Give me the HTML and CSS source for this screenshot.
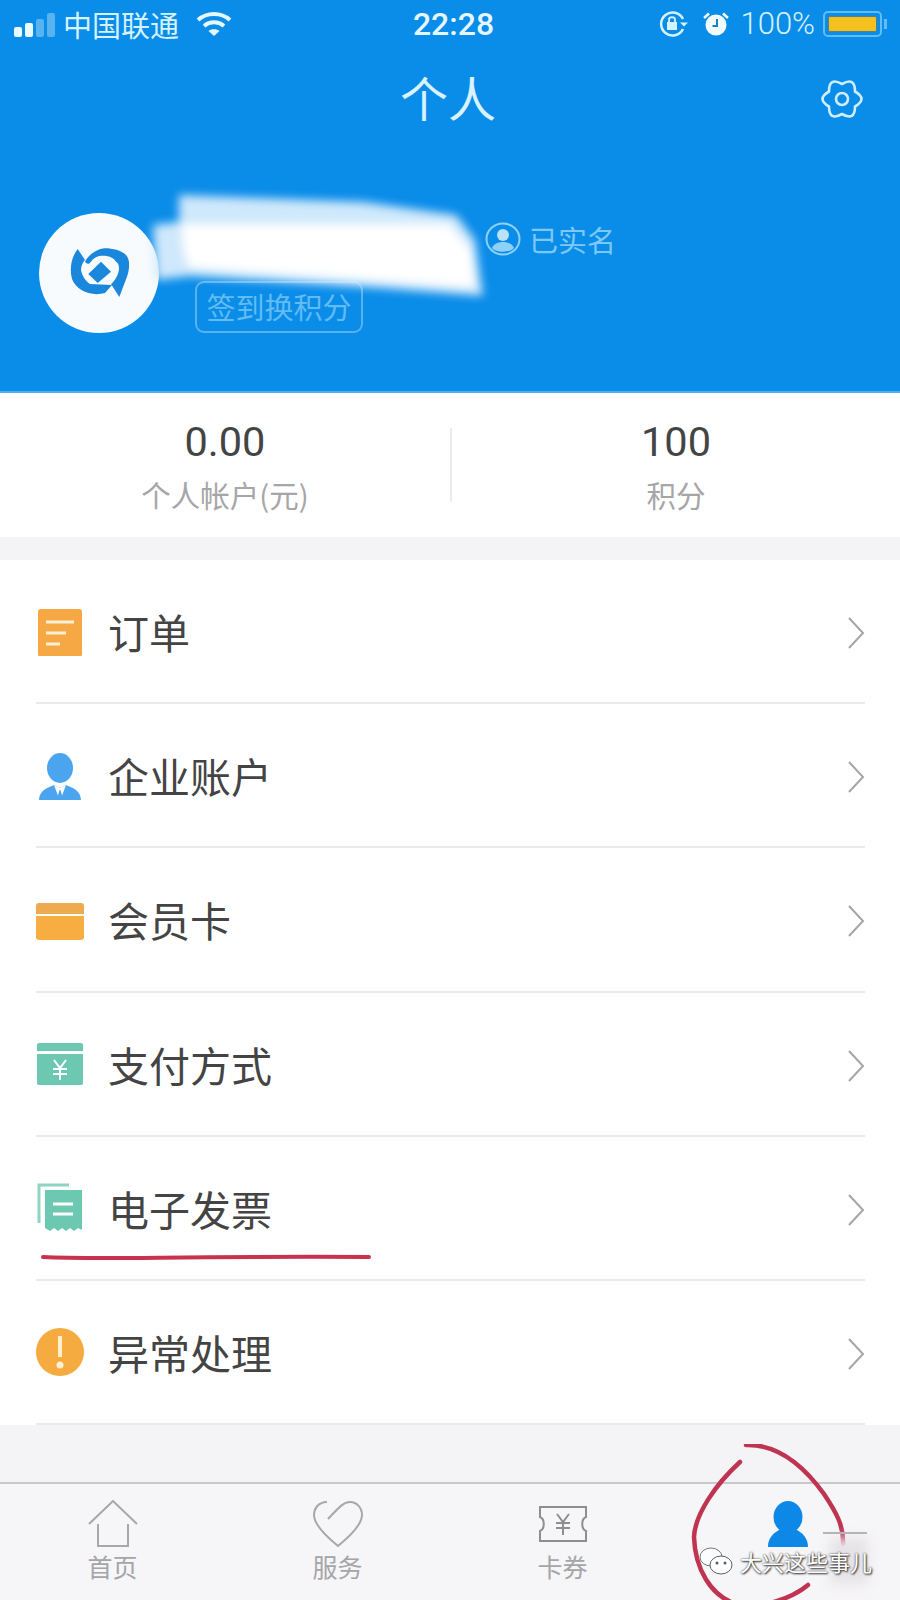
FILE: index.html
```html
<!DOCTYPE html>
<html lang="zh-CN">
<head>
  <meta charset="UTF-8">
  <meta name="viewport" content="width=device-width, initial-scale=1.0">
  <title>个人</title>
  <link rel="stylesheet" href="styles.css">
</head>
<body>
<div class="page">
  <header class="header">
    <div class="status">
      <div class="status-left">
        <div class="signal"><i class="b1"></i><i class="b2"></i><i class="b3"></i><i class="b4"></i></div>
        <span class="carrier">中国联通</span>
        <svg class="wifi" width="36" height="26" viewBox="0 0 36 26" fill="none" stroke="#e4f6ff" stroke-width="4"><path d="M2 9C11 1 25 1 34 9"/><path d="M8 15C14 10 22 10 28 15"/><path d="M18 25L12.500 20C15 17.500 21 17.500 23.500 20Z" fill="#e4f6ff" stroke="none"/></svg>
      </div>
      <span class="time">22:28</span>
      <div class="status-right">
        <svg class="lock" width="30" height="26" viewBox="0 0 30 26" fill="none" stroke="#d5f2ff" stroke-width="2.500"><path d="M24 18A11.500 11.500 0 1 1 24 8"/><path d="M21 11.500H29L25 15.500Z" fill="#d5f2ff" stroke="none"/><rect x="8" y="11" width="10" height="8" fill="#d5f2ff" stroke="none"/><path d="M10 11V8.500C10 5.500 16 5.500 16 8.500V11" stroke-width="1.800"/></svg>
        <svg class="alarm" width="26" height="24" viewBox="0 0 26 24"><circle cx="13" cy="13" r="10.500" fill="#f2fbff"/><path d="M14 7V14H9.500" fill="none" stroke="#1a7fc9" stroke-width="2"/><path d="M1 6L6 1.500M25 6L20 1.500" stroke="#f2fbff" stroke-width="2.500"/></svg>
        <span class="percent">100%</span>
        <div class="battery"><div class="battery-fill"></div></div>
        <div class="battery-nub"></div>
      </div>
    </div>
    <div class="nav">
      <h1 class="nav-title">个人</h1>
      <svg class="gear" width="42" height="40" viewBox="0 0 42 40" fill="none" stroke="#cdeeff" stroke-width="2.600" stroke-linejoin="round"><path d="M21 5Q34 -2.500 34 12.500Q47 20 34 27.500Q34 42.500 21 35Q8 42.500 8 27.500Q-5 20 8 12.500Q8 -2.500 21 5Z"/><circle cx="21" cy="20" r="6"/></svg>
    </div>
    <div class="profile">
      <div class="avatar">
        <svg width="60" height="50" viewBox="0 0 60 50" fill="#1a86dc"><path d="M8.700 1C3 8 0 20 3 31C7 42 22 49 36 45L43 37L21 36C16 33 13 27 12 22C12 18 14 14 16 12Z"/><path d="M16 13.700C20 6 28 1 35.300 .3C42 0 52 2 57 7C61 11 61 20 58 28.700L50.300 49L42 36C46 33 50 26 50 20.300C50 17 49 15 47 13.700C44 9 38 7 30.300 8C26 9 24 11 22 13.700C20 16 19 17 16 13.700Z"/><path d="M32 13.700L42 23.700L28.700 35L19.300 26Z"/></svg>
      </div>
      <div class="profile-info">
        <div class="name-row">
          <svg class="badge" width="36" height="34" viewBox="0 0 36 34" fill="none"><ellipse cx="18" cy="17" rx="16.500" ry="15.500" stroke="#8fd0f7" stroke-width="2"/><circle cx="18" cy="13" r="6" fill="#b9e2fa"/><path d="M7 26C10 18 26 18 29 26C25 31 11 31 7 26Z" fill="#8fd0f7"/></svg>
          <span class="verified">已实名</span>
        </div>
        <div class="checkin">签到换积分</div>
      </div>
      <svg class="smear" width="360" height="130" viewBox="0 0 360 130"><path d="M30 5L215 12L307 25L326 50L334 106L230 98L41 86L7 90L4 35L30 32Z" fill="#cfe8fb"/><path d="M32 34L300 34L322 60L326 98L220 90L40 78L34 60Z" fill="#fff"/></svg>
    </div>
  </header>

  <section class="stats">
    <div class="stat">
      <span class="stat-value">0.00</span>
      <span class="stat-label">个人帐户(元)</span>
    </div>
    <div class="stat stat-points">
      <span class="stat-value">100</span>
      <span class="stat-label">积分</span>
    </div>
  </section>

  <ul class="menu">
    <li class="row">
      <svg class="row-icon" width="48" height="50" viewBox="0 -2 48 50"><rect x="2" y="1" width="44" height="48" rx="3" fill="#f5a843"/><path d="M10 14H38M10 25H30M10 36H24" stroke="#fdf0da" stroke-width="3"/></svg>
      <span class="row-label">订单</span>
      <svg class="chevron" width="18" height="32" viewBox="0 0 18 32" fill="none" stroke="#a5a5a9" stroke-width="2"><path d="M2 1L16 16L2 31"/></svg>
    </li>
    <li class="row">
      <svg class="row-icon" width="48" height="50" viewBox="0 -2 48 50"><ellipse cx="24" cy="16" rx="13" ry="15" fill="#4ba5ee"/><path d="M3 49C3 40 8 37 18 33L24 36L30 33C40 37 45 40 45 49Z" fill="#4ba5ee"/><path d="M18 33L24 49L30 33L24 36Z" fill="#fff"/><path d="M24 37L27 46L24 49L21 46Z" fill="#4ba5ee"/></svg>
      <span class="row-label">企业账户</span>
      <svg class="chevron" width="18" height="32" viewBox="0 0 18 32" fill="none" stroke="#a5a5a9" stroke-width="2"><path d="M2 1L16 16L2 31"/></svg>
    </li>
    <li class="row">
      <svg class="row-icon" width="48" height="50" viewBox="0 -3 48 50"><path d="M0 9C0 7 1 6 3 6H45C47 6 48 7 48 9V17H0Z" fill="#eeaa4e"/><path d="M0 19H48V40C48 42 47 43 45 43H3C1 43 0 42 0 40Z" fill="#f8ad40"/></svg>
      <span class="row-label">会员卡</span>
      <svg class="chevron" width="18" height="32" viewBox="0 0 18 32" fill="none" stroke="#a5a5a9" stroke-width="2"><path d="M2 1L16 16L2 31"/></svg>
    </li>
    <li class="row">
      <svg class="row-icon" width="48" height="50" viewBox="0 0 48 50"><path d="M1 6C1 5 2 4 3 4H45C46 4 47 5 47 6V12H1Z" fill="#6cc8b1"/><path d="M1 15H47V44C47 45 46 46 45 46H3C2 46 1 45 1 44Z" fill="#6cc8b1"/><path d="M18 21L24 29L30 21M17 30H31M17 35H31M24 29V41" fill="none" stroke="#fff" stroke-width="2"/></svg>
      <span class="row-label">支付方式</span>
      <svg class="chevron" width="18" height="32" viewBox="0 0 18 32" fill="none" stroke="#a5a5a9" stroke-width="2"><path d="M2 1L16 16L2 31"/></svg>
    </li>
    <li class="row">
      <svg class="row-icon" width="48" height="50" viewBox="0 0 48 50"><path d="M3 40V2H33" fill="none" stroke="#8fd3c2" stroke-width="3"/><path d="M9 7H46V47L42 45L38 48L34 45L30 48L26 45L22 48L18 45L14 48L9 45Z" fill="#6cc8b1"/><path d="M17 21H37M17 31H37" stroke="#fff" stroke-width="3"/></svg>
      <span class="row-label">电子发票</span>
      <svg class="chevron" width="18" height="32" viewBox="0 0 18 32" fill="none" stroke="#a5a5a9" stroke-width="2"><path d="M2 1L16 16L2 31"/></svg>
    </li>
    <li class="row">
      <svg class="row-icon" width="48" height="50" viewBox="0 0 48 50"><circle cx="24" cy="25" r="24" fill="#f5ab3f"/><path d="M24 9V30" stroke="#fff0d0" stroke-width="4"/><circle cx="24" cy="38" r="3.500" fill="#fff0d0"/></svg>
      <span class="row-label">异常处理</span>
      <svg class="chevron" width="18" height="32" viewBox="0 0 18 32" fill="none" stroke="#a5a5a9" stroke-width="2"><path d="M2 1L16 16L2 31"/></svg>
    </li>
  </ul>

  <div class="spacer"></div>

  <nav class="tabs">
    <div class="tab">
      <svg class="tab-icon" width="50" height="48" viewBox="0 0 50 48" fill="none" stroke="#a8a8a8" stroke-width="2"><path d="M1 24L25 1L49 24"/><path d="M10 24V46H40V24"/></svg>
      <span class="tab-label">首页</span>
    </div>
    <div class="tab">
      <svg class="tab-icon" width="50" height="48" viewBox="0 0 50 48" fill="none" stroke="#a8a8a8" stroke-width="2"><path d="M14 2C5 2 1 9 1 15C1 25 14 37 25 46C36 37 49 25 49 15C49 8 44 2 37 2C31 2 27 6 15 19"/></svg>
      <span class="tab-label">服务</span>
    </div>
    <div class="tab">
      <svg class="tab-icon" width="50" height="48" viewBox="0 0 50 48" fill="none" stroke="#8e8e8e" stroke-width="2"><path d="M2 7H48V17C43 19 43 29 48 31V41H2V31C7 29 7 19 2 17Z"/><path d="M19 14L25 22L31 14M18 23H32M18 28H32M25 22V35" stroke-width="2"/></svg>
      <span class="tab-label">卡券</span>
    </div>
    <div class="tab">
      <svg class="tab-icon" width="50" height="48" viewBox="0 0 50 48"><ellipse cx="25" cy="17" rx="14.500" ry="16" fill="#0d88e6"/><path d="M5 47C5 38 10 33 18 29C22 33 28 33 32 29C40 33 45 38 45 47Z" fill="#0d88e6"/></svg>
      <span class="tab-label tab-hidden">我的</span>
    </div>
  </nav>

  <svg class="underline" width="340" height="10" viewBox="0 0 340 10" fill="none"><path d="M3 5C60 8 130 4 329 5" stroke="#c8324f" stroke-width="4" stroke-linecap="round"/></svg>
  <svg class="circle-mark" width="170" height="170" viewBox="0 0 170 170" fill="none" stroke="#bf3450" stroke-width="4.500" stroke-linecap="round"><path d="M60 1C95 0 120 25 138 50C150 68 158 82 157 100"/><path d="M54 18C30 40 9 70 8 93C9 125 25 152 50 160C75 165 105 155 122 141"/></svg>
  <div class="smudge"></div>
  <div class="smudge-line"></div>
  <div class="watermark">
    <svg width="36" height="30" viewBox="0 0 36 30"><ellipse cx="13" cy="11" rx="11" ry="9" fill="#fff" fill-opacity=".7" stroke="#777"/><ellipse cx="23" cy="19" rx="11" ry="9" fill="#fff" stroke="#55606a"/><circle cx="19" cy="17" r="1.500" fill="#55606a"/><circle cx="27" cy="17" r="1.500" fill="#55606a"/></svg>
    <span>大兴这些事儿</span>
  </div>
</div>
</body>
</html>
```

FILE: styles.css
```css
* {
  box-sizing: border-box;
}
html, body {
  margin: 0;
  padding: 0;
}
body {
  background: #fff;
  font-family: "Noto Sans CJK SC", "Noto Sans", sans-serif;
}
.page {
  position: relative;
  width: 900px;
  height: 1600px;
  overflow: hidden;
  display: flex;
  flex-direction: column;
  background: #fff;
}

/* blue header */
.header {
  height: 393px;
  background: #0a8ce9;
  color: #d5f2ff;
  border-bottom: 2px solid #4eb0ee;
}
.status {
  height: 50px;
  padding: 0 13px 3px 14px;
  display: grid;
  grid-template-columns: 1fr auto 1fr;
  align-items: center;
}
.status-left {
  display: flex;
  align-items: center;
}
.signal {
  display: flex;
  align-items: flex-end;
  gap: 3px;
  height: 24px;
  margin-top: 2px;
}
.signal i {
  display: block;
  width: 8px;
  border-radius: 2px;
  background: #eafaff;
}
.signal .b1 { height: 10px; }
.signal .b2 { height: 14px; }
.signal .b3 { height: 18px; background: #58b4f0; }
.signal .b4 { height: 24px; background: #58b4f0; }
.carrier {
  margin-left: 8px;
  font-size: 29px;
  line-height: 36px;
}
.wifi {
  margin-left: 17px;
}
.time {
  font-family: Roboto, sans-serif;
  font-size: 32px;
  font-weight: 500;
  color: #e4f6ff;
  margin-left: 6px;
}
.status-right {
  display: flex;
  align-items: center;
  justify-content: flex-end;
}
.alarm {
  margin-left: 14px;
}
.percent {
  margin-left: 11px;
  font-family: Roboto, sans-serif;
  font-size: 31px;
  font-weight: 300;
}
.battery {
  margin-left: 8px;
  width: 59px;
  height: 26px;
  padding: 3px;
  border: 2px solid #61bdf3;
  border-radius: 5px;
}
.battery-fill {
  height: 100%;
  background: #f4c21e;
  border: 1px solid #54808a;
  border-radius: 2px;
}
.battery-nub {
  width: 3px;
  height: 10px;
  margin-left: 2px;
  background: #61bdf3;
}
.nav {
  position: relative;
  height: 98px;
  display: flex;
  align-items: center;
  justify-content: center;
}
.nav-title {
  margin: 0 4px 6px 0;
  font-size: 48px;
  font-weight: 400;
  line-height: 1;
  color: #d9f2ff;
}
.gear {
  position: absolute;
  right: 37px;
  top: 29px;
}

.profile {
  position: relative;
  display: flex;
  padding: 65px 0 0 39px;
}
.avatar {
  width: 120px;
  height: 120px;
  border-radius: 50%;
  background: #f7fbfe;
  display: flex;
  align-items: center;
  justify-content: center;
}
.profile-info {
  margin-left: 36px;
}
.name-row {
  display: flex;
  align-items: center;
  height: 36px;
  padding-left: 290px;
  margin-top: 8px;
}
.verified {
  margin-left: 8px;
  font-size: 29px;
  line-height: 36px;
  color: #7cc8f6;
}
.checkin {
  width: 168px;
  height: 52px;
  margin-top: 24px;
  border: 2px solid #58b2f0;
  border-radius: 9px;
  font-size: 29px;
  line-height: 46px;
  text-align: center;
  color: #62bcf4;
}
.smear {
  position: absolute;
  left: 149px;
  top: 42px;
  filter: blur(5px);
}

/* balance row */
.stats {
  height: 144px;
  display: grid;
  grid-template-columns: 1fr 1fr;
  align-items: center;
}
.stat {
  height: 74px;
  display: flex;
  flex-direction: column;
  align-items: center;
  justify-content: space-between;
}
.stat-points {
  border-left: 2px solid #ececf0;
}
.stat-value {
  font-family: Roboto, sans-serif;
  font-size: 41.500px;
  line-height: 44px;
  color: #444;
  margin-top: -8px;
}
.stat-label {
  font-size: 29.500px;
  line-height: 40px;
  color: #a6a6a8;
  margin-bottom: -12px;
}

/* list */
.menu {
  list-style: none;
  margin: 0;
  padding: 0;
  border-top: 23px solid #f4f3f6;
}
.row {
  height: 144.200px;
  margin-left: 36px;
  margin-right: 35px;
  display: flex;
  align-items: center;
  border-bottom: 2px solid #ebebef;
}
.row-icon {
  flex: none;
}
.row-label {
  flex: 1;
  margin-left: 24px;
  font-size: 41px;
  line-height: 50px;
  color: #444;
}
.chevron {
  margin-top: 4px;
}

.spacer {
  flex: 1;
  background: #f4f3f6;
}

/* tab bar */
.tabs {
  height: 118px;
  background: #f6f5f7;
  border-top: 2px solid #c9c9cd;
  display: grid;
  grid-template-columns: repeat(4, 1fr);
}
.tab {
  display: flex;
  flex-direction: column;
  align-items: center;
  padding-top: 16px;
}
.tab-icon {
  flex: none;
}
.tab-label {
  margin-top: 3px;
  font-size: 25px;
  line-height: 30px;
  color: #a5a5a7;
}
.tab-hidden {
  visibility: hidden;
}

/* marks drawn over the screenshot */
.underline {
  position: absolute;
  left: 40px;
  top: 1252px;
}
.circle-mark {
  position: absolute;
  left: 686px;
  top: 1444px;
}
.smudge {
  position: absolute;
  left: 830px;
  top: 1538px;
  width: 38px;
  height: 46px;
  background: #e6e3e6;
  filter: blur(6px);
}
.smudge-line {
  position: absolute;
  left: 823px;
  top: 1532px;
  width: 44px;
  height: 2px;
  background: #b4b4b8;
}
.watermark {
  position: absolute;
  left: 698px;
  top: 1546px;
  display: flex;
  align-items: center;
  gap: 6px;
  font-size: 22px;
  line-height: 30px;
  color: #fff;
  text-shadow: 0 0 2px #333, 1px 1px 2px #333;
}
```
